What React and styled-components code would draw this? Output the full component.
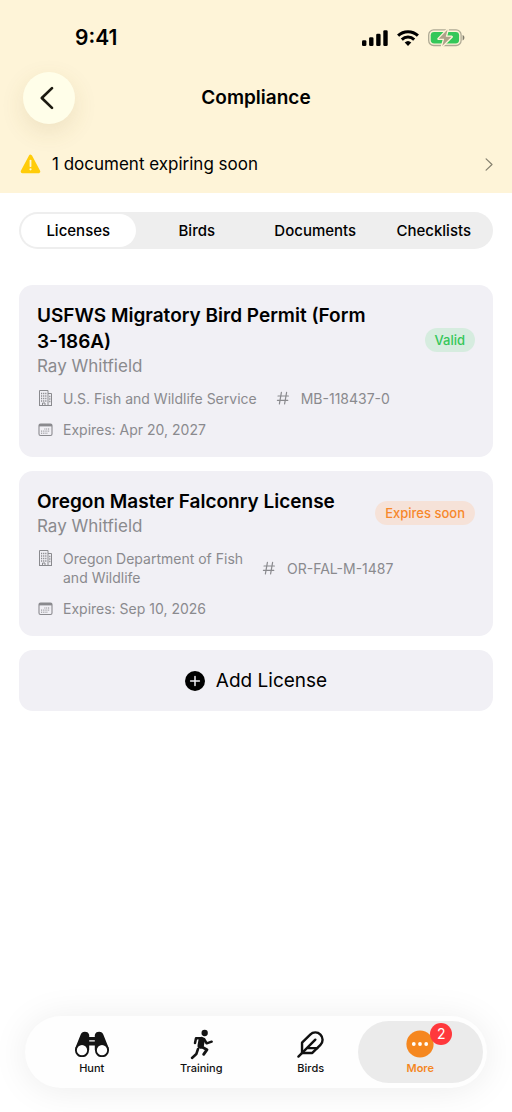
import React, { useState } from "react";
import styled, { createGlobalStyle } from "styled-components";

const GlobalStyle = createGlobalStyle`
  *, *::before, *::after { box-sizing: border-box; }
  body {
    margin: 0;
    background: #ffffff;
    color: #000000;
    font-family: Inter, "Liberation Sans", sans-serif;
  }
  button { font: inherit; color: inherit; border: 0; padding: 0; background: none; cursor: pointer; }
  h1, h2, p, ul { margin: 0; padding: 0; }
  svg { display: block; flex: none; }
`;

const Screen = styled.div`
  display: flex;
  flex-direction: column;
  min-height: 100vh;
`;

const Header = styled.header`
  background: #fef4d8;
`;

const StatusBar = styled.div`
  display: flex;
  align-items: center;
  justify-content: space-between;
  height: 72px;
  padding: 4px 47px 0 75px;
`;

const Clock = styled.time`
  font-size: 21px;
  line-height: 24px;
  font-weight: 600;
`;

const StatusIcons = styled.div`
  display: flex;
  align-items: center;
  gap: 9px;
`;

const NavBar = styled.div`
  display: grid;
  grid-template-columns: 52px 1fr 52px;
  align-items: center;
  padding: 0 23px;
`;

const BackButton = styled.button`
  display: flex;
  align-items: center;
  justify-content: center;
  width: 52px;
  height: 52px;
  border-radius: 50%;
  background: #fffee9;
  box-shadow: 0 8px 24px rgba(120, 100, 30, 0.12);
`;

const PageTitle = styled.h1`
  text-align: center;
  font-size: 19px;
  line-height: 24px;
  font-weight: 600;
`;

const AlertLink = styled.a`
  display: flex;
  align-items: center;
  gap: 11px;
  padding: 29px 19px 18px 20px;
  color: #000000;
  text-decoration: none;
  font-size: 17px;
  line-height: 22px;
`;

const AlertText = styled.span`
  flex: 1;
`;

const Content = styled.main`
  display: flex;
  flex-direction: column;
  gap: 14px;
  padding: 19px 19px 32px;
`;

const Segments = styled.div`
  display: grid;
  grid-template-columns: repeat(4, 1fr);
  gap: 4px;
  padding: 2px;
  margin-bottom: 22px;
  border-radius: 19px;
  background: #eeeeee;
`;

const Segment = styled.button`
  height: 33px;
  border-radius: 17px;
  font-size: 15px;
  line-height: 20px;
  font-weight: 500;
  background: ${(p) => (p.$active ? "#ffffff" : "transparent")};
`;

const Card = styled.article`
  display: flex;
  flex-direction: column;
  gap: 12px;
  padding: 18px;
  border-radius: 14px;
  background: #f1f0f5;
`;

const CardHeader = styled.div`
  display: flex;
  align-items: center;
  justify-content: space-between;
  gap: 38px;
`;

const CardTitle = styled.h2`
  font-size: 19px;
  line-height: 26px;
  font-weight: 600;
`;

const Holder = styled.p`
  font-size: 17px;
  line-height: 22px;
  color: #8a8a8e;
`;

const Badge = styled.span`
  flex: none;
  padding: 3px 10px;
  border-radius: 12px;
  font-size: 13px;
  line-height: 18px;
  font-weight: 500;
  color: ${(p) => (p.$tone === "ok" ? "#34c759" : "#f7882b")};
  background: ${(p) => (p.$tone === "ok" ? "#d6ecdf" : "#f6e2d8")};
`;

const MetaRow = styled.div`
  display: flex;
  align-items: center;
  gap: 18px;
`;

const Meta = styled.div`
  display: flex;
  align-items: flex-start;
  gap: 10px;
  font-size: 14px;
  line-height: 19px;
  color: #8a8a8e;
  white-space: pre-line;

  svg { width: 16px; height: 19px; }
`;

const AddButton = styled.button`
  display: flex;
  align-items: center;
  justify-content: center;
  gap: 11px;
  height: 61px;
  border-radius: 14px;
  background: #f1f0f5;
  font-size: 19px;
  line-height: 26px;
`;

const TabBar = styled.nav`
  display: grid;
  grid-template-columns: repeat(4, 1fr);
  margin: auto 25px 24px;
  padding: 5px 12px;
  border-radius: 36px;
  background: #fefefe;
  box-shadow: 0 2px 36px rgba(0, 0, 0, 0.08);
`;

const Tab = styled.button`
  position: relative;
  display: flex;
  flex-direction: column;
  align-items: center;
  justify-content: center;
  height: 62px;
  padding-bottom: 2px;
  font-size: 11px;
  line-height: 14px;
  font-weight: ${(p) => (p.$active ? 600 : 500)};
  color: ${(p) => (p.$active ? "#f5871f" : "#111111")};

  &::before {
    content: "";
    position: absolute;
    inset: 0 -8px;
    border-radius: 31px;
    background: ${(p) => (p.$active ? "#ebebeb" : "transparent")};
  }
`;

const TabIcon = styled.span`
  position: relative;
  display: flex;
  align-items: center;
  justify-content: center;
  width: 36px;
  height: 34px;
`;

const TabLabel = styled.span`
  position: relative;
`;

const Count = styled.span`
  position: absolute;
  top: -4px;
  right: -14px;
  width: 22px;
  height: 22px;
  border-radius: 50%;
  background: #ff383c;
  color: #ffffff;
  font-size: 14px;
  line-height: 22px;
  font-weight: 400;
  text-align: center;
`;

const SignalIcon = () => (
  <svg width="26" height="17" viewBox="0 0 26 17" aria-hidden="true">
    <rect x="0" y="10.3" width="4.4" height="5.7" rx="1.3" />
    <rect x="7.1" y="7.2" width="4.4" height="8.8" rx="1.3" />
    <rect x="14.2" y="3.8" width="4.4" height="12.2" rx="1.3" />
    <rect x="21.3" y="0.2" width="4.4" height="15.8" rx="1.3" />
  </svg>
);

const WifiIcon = () => (
  <svg width="22" height="17" viewBox="0 0 22 17" fill="none" stroke="#000" strokeWidth="3" aria-hidden="true">
    <path d="M1.1 5.7a14.2 14.2 0 0 1 19.8 0" />
    <path d="M4.8 9.6a9 9 0 0 1 12.4 0" />
    <path d="M11 15.9l-3.3-3.3a4.8 4.8 0 0 1 6.6 0z" fill="#000" stroke="none" />
  </svg>
);

const BatteryIcon = () => (
  <svg width="37" height="18" viewBox="0 0 37 18" aria-hidden="true">
    <rect x="0.7" y="0.9" width="32.4" height="15.6" rx="5" fill="none" stroke="#aea994" strokeWidth="1.3" />
    <rect x="2.7" y="2.9" width="28.4" height="11.6" rx="3.4" fill="#34c759" />
    <path d="M34.6 6c2.4.7 2.4 4.7 0 5.4z" fill="#7f7b6c" />
    <path d="M19.6 0.6L10.6 9.8h5.6l-2 7.2L23.6 7.8h-5.8z" fill="#aea28a" stroke="#fef4d8" strokeWidth="2.6" strokeLinejoin="round" paintOrder="stroke" />
  </svg>
);

const BackIcon = () => (
  <svg width="24" height="24" viewBox="0 0 24 24" fill="none" stroke="#1c1a10" strokeWidth="2.7" strokeLinecap="round" strokeLinejoin="round" aria-hidden="true">
    <path d="M15 2.1L4.8 12 15 21.9" />
  </svg>
);

const WarningIcon = () => (
  <svg width="21" height="20" viewBox="0 0 21 20" aria-hidden="true">
    <path d="M10.5 2.4L18.6 17.6H2.4z" fill="#ffcc0a" stroke="#ffcc0a" strokeWidth="3.4" strokeLinejoin="round" />
    <path d="M10.5 6.6v5.6" stroke="#fff6d8" strokeWidth="1.8" strokeLinecap="round" />
    <circle cx="10.5" cy="15.3" r="1.1" fill="#fff6d8" />
  </svg>
);

const ChevronIcon = () => (
  <svg width="8" height="13" viewBox="0 0 8 13" fill="none" stroke="#85806f" strokeWidth="1.2" strokeLinecap="round" strokeLinejoin="round" aria-hidden="true">
    <path d="M1.1 0.9l5.9 5.6-5.9 5.6" />
  </svg>
);

const BuildingIcon = () => (
  <svg viewBox="0 0 16 19" fill="none" stroke="#8a8a8e" strokeWidth="1" aria-hidden="true">
    <path d="M2.5 16.5v-15h8.5v15M11 4.5h3.5v12M2 16.5h13M5.5 16.5v-2.500h2.500v2.500" />
    <path d="M4 4.500h5.400M4 7h5.400M4 9.500h5.400M4 12h5.400" strokeWidth="1.300" strokeDasharray="1.200 0.900" />
    <path d="M12.200 7.500h1.200M12.200 10h1.200M12.200 12.500h1.200" strokeWidth="1.300" />
  </svg>
);

const CalendarIcon = () => (
  <svg viewBox="0 0 16 19" fill="none" stroke="#8a8a8e" aria-hidden="true">
    <rect x="2" y="4" width="13" height="11.5" rx="1.5" strokeWidth="1.1" />
    <path d="M2 5.2h13" strokeWidth="2.4" />
    <path d="M7.4 9h5.7M4 11.1h9M4 13.2h7" strokeWidth="1" strokeDasharray="1 .8" />
  </svg>
);

const HashIcon = () => (
  <svg viewBox="0 0 16 19" fill="none" stroke="#8a8a8e" strokeWidth="1.2" strokeLinecap="round" aria-hidden="true">
    <path d="M6.4 3.4L4.4 14.8M11.6 3.4l-2 11.4M3 7h10.4M2.4 11.3h10.4" />
  </svg>
);

const PlusIcon = () => (
  <svg width="20" height="20" viewBox="0 0 20 20" aria-hidden="true">
    <circle cx="10" cy="10" r="10" />
    <path d="M10 5.6v8.8M5.6 10h8.8" stroke="#f1f0f5" strokeWidth="1.5" strokeLinecap="round" />
  </svg>
);

const BinocularsIcon = () => (
  <svg width="36" height="26" viewBox="0 0 36 26" aria-hidden="true">
    <path d="M1.3 17L6.6 3.8Q7.6 0.7 10.8 0.7q3.8 0 4.4 3.4V19L8 14zM34.7 17L29.4 3.8Q28.400 0.7 25.200 0.7q-3.800 0-4.400 3.400V19l7.200-5z" fill="#141414" />
    <path d="M14.5 6h7v3.300h-7zM14.500 10.600h7v4h-7z" fill="#141414" />
    <circle cx="8" cy="19.2" r="6.100" fill="#fff" stroke="#141414" strokeWidth="1.900" />
    <circle cx="28" cy="19.2" r="6.100" fill="#fff" stroke="#141414" strokeWidth="1.900" />
  </svg>
);

const RunnerIcon = () => (
  <svg width="25" height="31" viewBox="564 84 75 93" fill="none" stroke="#141414" strokeWidth="7.5" strokeLinecap="round" strokeLinejoin="round" aria-hidden="true">
    <circle cx="611" cy="96" r="9.5" fill="#141414" stroke="none" />
    <path d="M601 112H585L582 126" />
    <path d="M609 114l8 13 15-5" />
    <path d="M602 117l-3 17" strokeWidth="19" />
    <path d="M599 136l19 10-10 14" strokeWidth="8.5" />
    <path d="M591 144l-5 15-13 12" />
  </svg>
);

const FeatherIcon = () => (
  <svg width="29" height="29" viewBox="0 0 24 24" fill="none" stroke="#111111" strokeWidth="2" strokeLinecap="round" strokeLinejoin="round" aria-hidden="true">
    <path d="M20.24 12.24a6 6 0 0 0-8.49-8.49L5 10.5V19h8.5z" />
    <path d="M16 8L2 22M17.5 15H9" />
  </svg>
);

const MoreIcon = () => (
  <svg width="28" height="28" viewBox="0 0 28 28" aria-hidden="true">
    <circle cx="14" cy="14" r="13.6" fill="#f5871f" />
    <circle cx="7.8" cy="14" r="1.9" fill="#fff" />
    <circle cx="14" cy="14" r="1.9" fill="#fff" />
    <circle cx="20.2" cy="14" r="1.9" fill="#fff" />
  </svg>
);

const licenses = [
  {
    title: "USFWS Migratory Bird Permit (Form 3-186A)",
    holder: "Ray Whitfield",
    agency: "U.S. Fish and Wildlife Service",
    number: "MB-118437-0",
    expires: "Apr 20, 2027",
    status: "Valid",
    tone: "ok",
  },
  {
    title: "Oregon Master Falconry License",
    holder: "Ray Whitfield",
    agency: "Oregon Department of Fish\nand Wildlife",
    number: "OR-FAL-M-1487",
    expires: "Sep 10, 2026",
    status: "Expires soon",
    tone: "warn",
  },
];

const sections = ["Licenses", "Birds", "Documents", "Checklists"];

const tabs = [
  { label: "Hunt", Icon: BinocularsIcon },
  { label: "Training", Icon: RunnerIcon },
  { label: "Birds", Icon: FeatherIcon },
  { label: "More", Icon: MoreIcon, count: 2 },
];

function LicenseCard({ license }) {
  return (
    <Card>
      <CardHeader>
        <div>
          <CardTitle>{license.title}</CardTitle>
          <Holder>{license.holder}</Holder>
        </div>
        <Badge $tone={license.tone}>{license.status}</Badge>
      </CardHeader>
      <MetaRow>
        <Meta><BuildingIcon /><span>{license.agency}</span></Meta>
        <Meta><HashIcon /><span>{license.number}</span></Meta>
      </MetaRow>
      <Meta><CalendarIcon /><span>Expires: {license.expires}</span></Meta>
    </Card>
  );
}

export default function App() {
  const [section, setSection] = useState("Licenses");
  const [tab, setTab] = useState("More");

  return (
    <Screen>
      <GlobalStyle />
      <Header>
        <StatusBar>
          <Clock>9:41</Clock>
          <StatusIcons><SignalIcon /><WifiIcon /><BatteryIcon /></StatusIcons>
        </StatusBar>
        <NavBar>
          <BackButton aria-label="Back"><BackIcon /></BackButton>
          <PageTitle>Compliance</PageTitle>
        </NavBar>
        <AlertLink href="#expiring">
          <WarningIcon />
          <AlertText>1 document expiring soon</AlertText>
          <ChevronIcon />
        </AlertLink>
      </Header>
      <Content>
        <Segments role="tablist">
          {sections.map((name) => (
            <Segment
              key={name}
              role="tab"
              aria-selected={name === section}
              $active={name === section}
              onClick={() => setSection(name)}
            >
              {name}
            </Segment>
          ))}
        </Segments>
        {licenses.map((license) => (
          <LicenseCard key={license.number} license={license} />
        ))}
        <AddButton><PlusIcon />Add License</AddButton>
      </Content>
      <TabBar>
        {tabs.map(({ label, Icon, count }) => (
          <Tab key={label} $active={label === tab} onClick={() => setTab(label)}>
            <TabIcon>
              <Icon />
              {count && <Count>{count}</Count>}
            </TabIcon>
            <TabLabel>{label}</TabLabel>
          </Tab>
        ))}
      </TabBar>
    </Screen>
  );
}
